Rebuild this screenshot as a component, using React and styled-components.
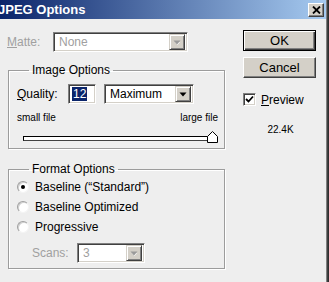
import React from 'react'
import styled, { createGlobalStyle } from 'styled-components'

const GlobalStyle = createGlobalStyle`
  html, body {
    margin: 0;
    padding: 0;
    background: #eeeeee;
  }
  body {
    font-family: "Liberation Sans", Arial, sans-serif;
    font-size: 12px;
    color: #000;
  }
`

const Window = styled.div`
  width: 329px;
  height: 282px;
  background: #eeeeee;
  box-sizing: border-box;
  overflow: hidden;
  box-shadow: inset -1px 0 0 #2e2e2e, inset -2px 0 0 #404040, inset -3px 0 0 #808080;
`

const TitleBar = styled.div`
  height: 19px;
  margin-right: 3px;
  display: flex;
  align-items: center;
  justify-content: space-between;
  background: linear-gradient(to right, #0a246a, #a6caf0);
`

const Title = styled.div`
  margin-left: -2px;
  color: #fff;
  font-weight: bold;
  font-size: 13px;
`

const CloseButton = styled.div`
  width: 16px;
  height: 14px;
  margin-right: 2px;
  box-sizing: border-box;
  background: #d4d0c8;
  border: 1px solid;
  border-color: #fff #404040 #404040 #fff;
  box-shadow: inset -1px -1px 0 #808080;
  display: flex;
  align-items: center;
  justify-content: center;
`

const Body = styled.div`
  display: flex;
`

const Main = styled.div`
  margin-left: 7px;
  width: 218px;
  display: flex;
  flex-direction: column;
`

const Side = styled.div`
  margin-left: 18px;
  width: 73px;
  display: flex;
  flex-direction: column;
`

const FieldRow = styled.div`
  display: flex;
  align-items: center;
  height: ${p => p.$h || 20}px;
  margin-top: ${p => p.$mt || 0}px;
  padding-left: ${p => p.$indent || 0}px;
`

const Label = styled.span`
  width: ${p => p.$w}px;
  color: ${p => (p.$disabled ? '#a0a0a0' : '#000')};
  u {
    text-decoration: underline;
    text-underline-offset: 1px;
  }
`

const Sunken = styled.div`
  width: ${p => p.$w}px;
  height: 20px;
  margin-left: ${p => p.$ml || 0}px;
  box-sizing: border-box;
  background: #fff;
  border: 1px solid;
  border-color: #808080 #fff #fff #808080;
  box-shadow: inset 1px 1px 0 #404040, inset -1px -1px 0 #d4d0c8;
  display: flex;
  align-items: center;
  padding: 2px;
`

const SelectText = styled.span`
  flex: 1;
  padding-left: 3px;
  color: ${p => (p.$disabled ? '#a0a0a0' : '#000')};
`

const ArrowButton = styled.div`
  width: 16px;
  height: 16px;
  box-sizing: border-box;
  background: #d4d0c8;
  border: 1px solid;
  border-color: #d4d0c8 #404040 #404040 #d4d0c8;
  box-shadow: inset 1px 1px 0 #fff, inset -1px -1px 0 #808080;
  display: flex;
  align-items: center;
  justify-content: center;
`

const Selected = styled.span`
  background: #0a246a;
  color: #fff;
  padding: 0 1px;
  line-height: 14px;
  margin-left: 1px;
`

const Group = styled.fieldset`
  margin: ${p => p.$mt}px 0 0 1px;
  width: 217px;
  height: ${p => p.$h}px;
  box-sizing: border-box;
  border: 1px solid #9c9c9c;
  box-shadow: 1px 1px 0 #fff, inset 1px 1px 0 #fff;
  padding: ${p => p.$pad};
  min-width: 0;
`

const Legend = styled.legend`
  margin-left: 12px;
  padding: 0 3px;
  line-height: 14px;
`

const TickRow = styled.div`
  display: flex;
  justify-content: space-between;
  font-size: 10px;
  margin-top: 7px;
  line-height: 13px;
`

const SliderBox = styled.div`
  position: relative;
  margin: 7px 0 0 6px;
  width: 190px;
  height: 12px;
  display: flex;
  align-items: flex-end;
`

const Track = styled.div`
  width: 100%;
  height: 5px;
  box-sizing: border-box;
  background: #fff;
  border: 1px solid #000;
  border-bottom-color: #404040;
  margin-bottom: 2px;
`

const Thumb = styled.svg`
  position: absolute;
  top: 0;
  margin-left: -6px;
`

const RadioRow = styled.div`
  display: flex;
  align-items: center;
  height: 20px;
  gap: 6px;
`

const Radio = styled.div`
  width: 12px;
  height: 12px;
  box-sizing: border-box;
  border-radius: 50%;
  background: #fff;
  border: 1px solid;
  border-color: #a0a0a0 #f4f4f4 #f4f4f4 #a0a0a0;
  box-shadow: inset 1px 1px 0 #d0d0d0;
  display: flex;
  align-items: center;
  justify-content: center;
  &::after {
    content: '';
    width: 4px;
    height: 4px;
    border-radius: 50%;
    background: ${p => (p.$checked ? '#000' : 'transparent')};
  }
`

const Button = styled.div`
  height: 21px;
  margin-top: ${p => p.$mt}px;
  box-sizing: border-box;
  background: #d4d0c8;
  border: 1px solid;
  border-color: ${p => (p.$default ? '#000' : '#fff #404040 #404040 #fff')};
  box-shadow: ${p =>
    p.$default
      ? 'inset 1px 1px 0 #fff, inset -1px -1px 0 #404040, inset -2px -2px 0 #808080'
      : 'inset -1px -1px 0 #808080'};
  display: flex;
  align-items: center;
  justify-content: center;
  font-size: 13px;
`

const CheckRow = styled.div`
  display: flex;
  align-items: center;
  gap: 5px;
  margin-top: 14px;
  height: 15px;
  u {
    text-decoration: underline;
    text-underline-offset: 1px;
  }
`

const CheckBox = styled.div`
  width: 13px;
  height: 13px;
  box-sizing: border-box;
  background: #fff;
  border: 1px solid;
  border-color: #808080 #fff #fff #808080;
  box-shadow: inset 1px 1px 0 #404040, inset -1px -1px 0 #d4d0c8;
  display: flex;
  align-items: center;
  justify-content: center;
`

const FileSize = styled.div`
  margin-top: 17px;
  font-size: 10px;
  text-align: center;
  padding-left: 2px;
`

function Arrow({ disabled }) {
  return (
    <svg width="8" height="5" viewBox="0 0 8 5">
      {disabled && <path d="M2 2h5l-2.5 3z" fill="#fff" />}
      <path d="M0.5 0.5h7l-3.5 4z" fill={disabled ? '#9a9a9a' : '#000'} />
    </svg>
  )
}

function Select({ width, value, disabled, ml }) {
  return (
    <Sunken $w={width} $ml={ml}>
      <SelectText $disabled={disabled}>{value}</SelectText>
      <ArrowButton>
        <Arrow disabled={disabled} />
      </ArrowButton>
    </Sunken>
  )
}

export default function App() {
  const quality = 12
  const pct = (quality / 12) * 100

  return (
    <Window>
      <GlobalStyle />
      <TitleBar>
        <Title>JPEG Options</Title>
        <CloseButton>
          <svg width="9" height="8" viewBox="0 0 9 8">
            <path d="M1 0.5l7 7M8 0.5l-7 7" stroke="#000" strokeWidth="1.8" />
          </svg>
        </CloseButton>
      </TitleBar>
      <Body>
        <Main>
          <FieldRow $mt={13}>
            <Label $w={46} $disabled>
              <u>M</u>atte:
            </Label>
            <Select width={135} value="None" disabled />
          </FieldRow>

          <Group $mt={11} $h={86} $pad="7px 6px 0 8px">
            <Legend>Image Options</Legend>
            <FieldRow>
              <Label $w={51}>
                <u>Q</u>uality:
              </Label>
              <Sunken $w={28}>
                <Selected>{quality}</Selected>
              </Sunken>
              <Select width={90} value="Maximum" ml={8} />
            </FieldRow>
            <TickRow>
              <span>small file</span>
              <span>large file</span>
            </TickRow>
            <SliderBox>
              <Track />
              <Thumb width="11" height="12" viewBox="0 0 11 12" style={{ left: `${pct}%` }}>
                <path d="M5.5 0.5L10.5 5.5V11.5H0.5V5.5Z" fill="#fff" stroke="#000" />
              </Thumb>
            </SliderBox>
          </Group>

          <Group $mt={13} $h={107} $pad="1px 6px 0 8px">
            <Legend>Format Options</Legend>
            <RadioRow>
              <Radio $checked />
              <span>Baseline (“Standard”)</span>
            </RadioRow>
            <RadioRow>
              <Radio />
              <span>Baseline Optimized</span>
            </RadioRow>
            <RadioRow>
              <Radio />
              <span>Progressive</span>
            </RadioRow>
            <FieldRow $mt={6} $indent={15}>
              <Label $w={45} $disabled>
                Scans:
              </Label>
              <Select width={68} value="3" disabled />
            </FieldRow>
          </Group>
        </Main>

        <Side>
          <Button $default $mt={11}>OK</Button>
          <Button $mt={6}>Cancel</Button>
          <CheckRow>
            <CheckBox>
              <svg width="9" height="9" viewBox="0 0 9 9">
                <path d="M1 4l2.5 2.5L8 1.5" stroke="#000" strokeWidth="1.8" fill="none" />
              </svg>
            </CheckBox>
            <span>
              <u>P</u>review
            </span>
          </CheckRow>
          <FileSize>22.4K</FileSize>
        </Side>
      </Body>
    </Window>
  )
}
